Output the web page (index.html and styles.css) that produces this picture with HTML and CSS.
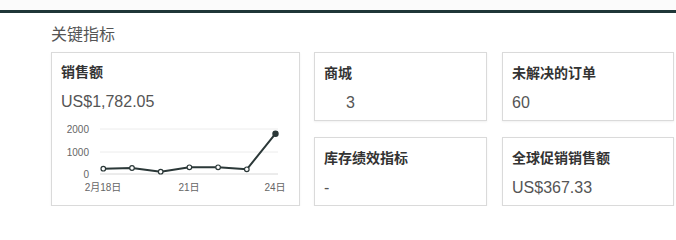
FILE: index.html
```html
<!DOCTYPE html>
<html lang="zh-CN">
<head>
<meta charset="utf-8">
<link rel="stylesheet" href="styles.css">
</head>
<body>
<div class="topbar"></div>
<section class="metrics">
  <h2 class="metrics-title">关键指标</h2>
  <div class="grid">
    <div class="card card-sales">
      <div class="card-title">销售额</div>
      <div class="card-value">US$1,782.05</div>
      <svg class="chart" width="240" height="82" viewBox="0 0 240 82">
        <g class="gridlines">
          <line x1="48" y1="13" x2="226" y2="13"/>
          <line x1="48" y1="36" x2="226" y2="36"/>
          <line x1="48" y1="58" x2="226" y2="58" class="base"/>
        </g>
        <g class="ylabels">
          <text x="37" y="16.5">2000</text>
          <text x="37" y="39.5">1000</text>
          <text x="37" y="61.5">0</text>
        </g>
        <g class="xlabels">
          <text x="51" y="75">2月18日</text>
          <text x="137" y="75">21日</text>
          <text x="223" y="75">24日</text>
        </g>
        <polyline class="series" points="51.3,52.7 80,52 108.7,55.7 137.4,51.3 166.1,51.3 194.8,53.3 223.5,17.7"/>
        <g class="dots">
          <circle cx="51.3" cy="52.7" r="2.3"/>
          <circle cx="80" cy="52" r="2.3"/>
          <circle cx="108.7" cy="55.7" r="2.3"/>
          <circle cx="137.4" cy="51.3" r="2.3"/>
          <circle cx="166.1" cy="51.3" r="2.3"/>
          <circle cx="194.8" cy="53.3" r="2.3"/>
          <circle cx="223.5" cy="17.7" r="2.6" class="last"/>
        </g>
      </svg>
    </div>
    <div class="card">
      <div class="card-title">商城</div>
      <div class="card-value indent">3</div>
    </div>
    <div class="card">
      <div class="card-title">未解决的订单</div>
      <div class="card-value">60</div>
    </div>
    <div class="card">
      <div class="card-title">库存绩效指标</div>
      <div class="card-value">-</div>
    </div>
    <div class="card">
      <div class="card-title">全球促销销售额</div>
      <div class="card-value">US$367.33</div>
    </div>
  </div>
</section>
</body>
</html>
```
FILE: styles.css
```css
* { box-sizing: border-box; }
html, body {
  margin: 0;
  padding: 0;
  background: #ffffff;
  font-family: "Liberation Sans", "Noto Sans CJK SC", sans-serif;
  color: #555;
}
.topbar {
  height: 13px;
  border-bottom: 3px solid #1f3638;
  background: #fbfbfb;
}
.metrics {
  padding-left: 51px;
}
.metrics-title {
  margin: 0;
  padding-top: 13px;
  height: 39px;
  font-size: 16px;
  line-height: 18px;
  font-weight: normal;
  color: #555;
}
.grid {
  display: grid;
  grid-template-columns: 249px 173px 173px;
  grid-template-rows: 69px 69px;
  column-gap: 14px;
  row-gap: 16px;
}
.grid > .card:nth-child(3),
.grid > .card:nth-child(5) { margin-left: 1px; }
.card {
  border: 1px solid #dadada;
  box-shadow: 0 1px 2px rgba(0,0,0,0.06);
  background: #fff;
  padding: 12px 9px 0;
}
.card-sales {
  grid-row: 1 / span 2;
  padding-top: 11px;
  padding-bottom: 0;
}
.card-title {
  font-size: 14px;
  line-height: 16px;
  font-weight: bold;
  color: #333;
}
.card-value {
  margin-top: 12px;
  font-size: 16px;
  line-height: 20px;
  color: #555;
}
.card-value.indent { padding-left: 22px; }
.chart {
  display: block;
  margin-left: -9px;
  margin-top: 4px;
}
.gridlines line { stroke: #ececec; stroke-width: 1; }
.gridlines line.base { stroke: #d8d8d8; }
.ylabels text {
  font-family: "Liberation Sans", "Noto Sans CJK SC", sans-serif;
  font-size: 10px;
  fill: #666;
  text-anchor: end;
}
.xlabels text {
  font-family: "Liberation Sans", "Noto Sans CJK SC", sans-serif;
  font-size: 10px;
  fill: #666;
  text-anchor: middle;
}
.series {
  fill: none;
  stroke: #2b3838;
  stroke-width: 2;
  stroke-linejoin: round;
}
.dots circle {
  fill: #fff;
  stroke: #2b3838;
  stroke-width: 1.2;
}
.dots circle.last { fill: #2b3838; }
```
